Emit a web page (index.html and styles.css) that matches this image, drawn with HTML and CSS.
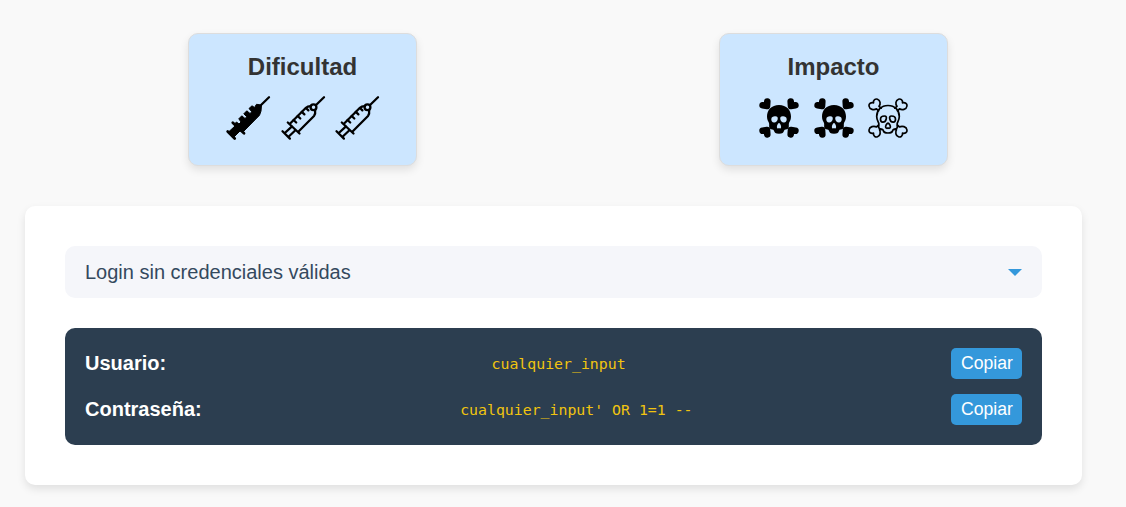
FILE: index.html
```html
<!DOCTYPE html>
<html lang="es">
<head>
<meta charset="utf-8">
<title>Inyección SQL</title>
<link rel="stylesheet" href="styles.css">
</head>
<body>
<svg class="defs" aria-hidden="true">
  <symbol id="syringe-full" viewBox="-3 -3 50 50">
    <path d="M35.300 8.700L43 1.200" fill="none" stroke="#000" stroke-width="2.300" stroke-linecap="round"/>
    <path d="M1.700 35.500L8.700 42.500M6.800 26.700L18 37.200" fill="none" stroke="#000" stroke-width="2.800" stroke-linecap="round"/>
    <path d="M8.500 28L10.500 26L13 28L15 26L12.800 22.800L15.800 19.800L19 22.500L20.800 20.800L17.800 17.800L20.800 14.800L24 17.500L25.800 15.800L23 12.500L26 9.800L28.500 11.500L30.500 8.300L35.500 9L35 15L33.500 19.300L17.500 35.500L14 35L8 41L2.500 36L9 30Z" stroke="#000" stroke-width="1" stroke-linejoin="round"/>
  </symbol>
  <symbol id="syringe-empty" viewBox="-3 -3 50 50">
    <g fill="none" stroke="#000" stroke-width="2.300" stroke-linecap="round" stroke-linejoin="round">
      <path d="M35.300 8.700L43 1.200M1.500 35.300L8.900 42.600M6.800 26.500L18.500 37.500M3.800 37L11 30.300M7.800 40.500L14.700 34"/>
      <path d="M8.900 27.700L24.700 12Q26.700 10 30 10.100M17.800 35.300L33 20Q34.700 18 34.100 14.200"/>
      <circle cx="32.500" cy="11.300" r="2.900"/>
      <path d="M12.600 24L15.200 26.500M16.700 20L19.300 22.500M20.800 15.900L23.400 18.400M25 12L27.400 14.400"/>
    </g>
  </symbol>
  <symbol id="skull-full" viewBox="-5 -5 50 50">
    <path d="M8.300 3.600L8 8L3.600 7.300M31.700 3.600L32 8L36.400 7.300M3.600 32.700L8 32L8.300 36.400M36.400 32.700L32 32L31.700 36.400" stroke="#000" stroke-width="6.600" stroke-linecap="round" stroke-linejoin="round"/>
    <path d="M20 7C12.500 7 8 12 8 18.500C8 21.500 9 23 10 25C10.600 27 9.500 29.500 11 30.800C12.500 32 14.300 31 15 32.800C15.500 34.800 16.500 35.800 20 35.800S24.500 34.800 25 32.800C25.700 31 27.500 32 29 30.800C30.500 29.500 29.400 27 30 25C31 23 32 21.500 32 18.500C32 12 27.500 7 20 7Z"/>
    <path class="hole" d="M12.300 21.200C12.300 19 14.300 18.200 16.300 18.300C18.400 18.400 19 19.500 18.700 21.300C18.300 23.500 17 24.500 15 24.400C13.200 24.300 12.300 23.200 12.300 21.200ZM27.700 21.200C27.700 19 25.700 18.200 23.700 18.300C21.600 18.400 21 19.500 21.300 21.300C21.700 23.500 23 24.500 25 24.400C26.800 24.300 27.700 23.200 27.700 21.200ZM20 25C18.800 25.300 17.700 27.700 17.900 29.200C18.100 30.500 19.200 30.700 20 30.100C20.800 30.700 21.900 30.500 22.100 29.200C22.300 27.700 21.200 25.300 20 25Z"/>
  </symbol>
  <symbol id="skull-empty" viewBox="-5 -5 50 50">
    <g fill="none" stroke="#000" stroke-width="1.700" stroke-linecap="round" stroke-linejoin="round">
      <path d="M10.500 12.800L8.500 10.800C6 12.500 1.500 11.500 1 8C.700 5.500 3 4.200 5.500 4.800C5 2 7.500 .500 9.500 1.200C12.500 2.300 12.800 6 11 8.300L13.200 10.200"/>
      <path d="M29.500 12.800L31.500 10.800C34 12.500 38.500 11.500 39 8C39.300 5.500 37 4.200 34.500 4.800C35 2 32.500 .500 30.500 1.200C27.500 2.300 27.200 6 29 8.300L26.800 10.200"/>
      <path d="M10.500 27.200L8.500 29C6 27.500 1.500 28.500 1 32C.700 34.500 3 35.800 5.500 35.200C5 38 7.500 39.500 9.500 38.800C12.500 37.700 12.800 34 11.500 31.700L14.500 31.500"/>
      <path d="M29.500 27.200L31.500 29C34 27.500 38.500 28.500 39 32C39.300 34.500 37 35.800 34.500 35.200C35 38 32.500 39.500 30.500 38.800C27.500 37.700 27.200 34 28.500 31.700L25.500 31.500"/>
      <path d="M20 7.500C13 7.500 8.700 12.300 8.700 18.500C8.700 21.500 9.800 23 10.700 25C11.300 27 9.900 29.200 11.300 30.300C12.800 31.500 14.700 30.500 15.300 32.500C15.700 34.500 16.700 35 20 35S24.300 34.500 24.700 32.500C25.300 30.500 27.200 31.500 28.700 30.300C30.100 29.200 28.700 27 29.300 25C30.200 23 31.300 21.500 31.300 18.500C31.300 12.300 27 7.500 20 7.500Z"/>
      <path d="M12.500 21.300C12.500 19.300 14.300 18 16.500 18C18.300 18 18.700 19.300 18.200 21C17.700 23 16.500 24.300 14.700 24.200C13.200 24.100 12.500 23 12.500 21.300ZM27.500 21.300C27.500 19.300 25.700 18 23.500 18C21.700 18 21.300 19.300 21.800 21C22.300 23 23.500 24.300 25.300 24.200C26.800 24.100 27.500 23 27.500 21.300ZM20 25.200C18.500 25.500 17.300 28 17.700 29.300C18 30.500 19.200 30.500 20 29.900C20.800 30.500 22 30.500 22.300 29.300C22.700 28 21.500 25.500 20 25.200Z"/>
    </g>
  </symbol>
</svg>
<main class="page">
  <section class="ratings">
    <article class="rating">
      <h2 class="rating-title">Dificultad</h2>
      <div class="rating-icons">
        <svg class="icon"><use href="#syringe-full"/></svg>
        <svg class="icon"><use href="#syringe-empty"/></svg>
        <svg class="icon"><use href="#syringe-empty"/></svg>
      </div>
    </article>
    <article class="rating">
      <h2 class="rating-title">Impacto</h2>
      <div class="rating-icons">
        <svg class="icon"><use href="#skull-full"/></svg>
        <svg class="icon"><use href="#skull-full"/></svg>
        <svg class="icon"><use href="#skull-empty"/></svg>
      </div>
    </article>
  </section>
  <section class="panel">
    <div class="select">
      <span>Login sin credenciales válidas</span>
      <svg class="arrow" viewBox="0 0 14 7"><path d="M0 0H14L7 7Z"/></svg>
    </div>
    <div class="credentials">
      <div class="row"><strong>Usuario:</strong><code class="value">cualquier_input</code><button class="copy">Copiar</button></div>
      <div class="row"><strong>Contraseña:</strong><code class="value">cualquier_input' OR 1=1 --</code><button class="copy">Copiar</button></div>
    </div>
  </section>
</main>
</body>
</html>
```
FILE: styles.css
```css
* { box-sizing: border-box; }
body {
  margin: 0;
  background: #f9f9f9;
  color: #333;
  font: 20px "Liberation Sans", Arial, sans-serif;
}
.defs { display: none; }
.page { padding: 33px 44px 21px 25px; }
.ratings {
  display: flex;
  gap: 302px;
  padding-left: 163px;
}
.rating {
  width: 229px;
  height: 133px;
  padding: 19px 0 0;
  background: #cce6ff;
  border: 1px solid #ddd;
  border-radius: 10px;
  box-shadow: 0 4px 8px rgba(0, 0, 0, .1);
}
.rating-title {
  margin: 0 0 12px;
  font-size: 24px;
  line-height: 28px;
  text-align: center;
}
.rating-icons {
  display: flex;
  justify-content: center;
  gap: 4.4px;
}
.icon { width: 50px; height: 50px; }
.hole { fill: #cce6ff; }
.panel {
  margin-top: 40px;
  padding: 40px;
  background: #fff;
  border-radius: 10px;
  box-shadow: 0 4px 8px rgba(0, 0, 0, .1);
}
.select {
  display: flex;
  align-items: center;
  justify-content: space-between;
  height: 52px;
  padding: 0 20px;
  background: #f5f6fa;
  color: #34495e;
  border-radius: 10px;
}
.arrow { width: 14px; height: 7px; fill: #3498db; }
.credentials {
  display: grid;
  gap: 15px;
  margin-top: 30px;
  padding: 20px;
  background: #2c3e50;
  color: #fff;
  border-radius: 10px;
}
.row {
  display: flex;
  align-items: center;
  justify-content: space-between;
  height: 31px;
}
.value {
  color: #f1c40f;
  font: 14.85px "DejaVu Sans Mono", monospace;
}
.copy {
  width: 71px;
  height: 31px;
  padding: 0 0 0 1px;
  background: #3498db;
  color: #fff;
  border: 0;
  border-radius: 5px;
  font: 17.6px "Liberation Sans", Arial, sans-serif;
}
```
